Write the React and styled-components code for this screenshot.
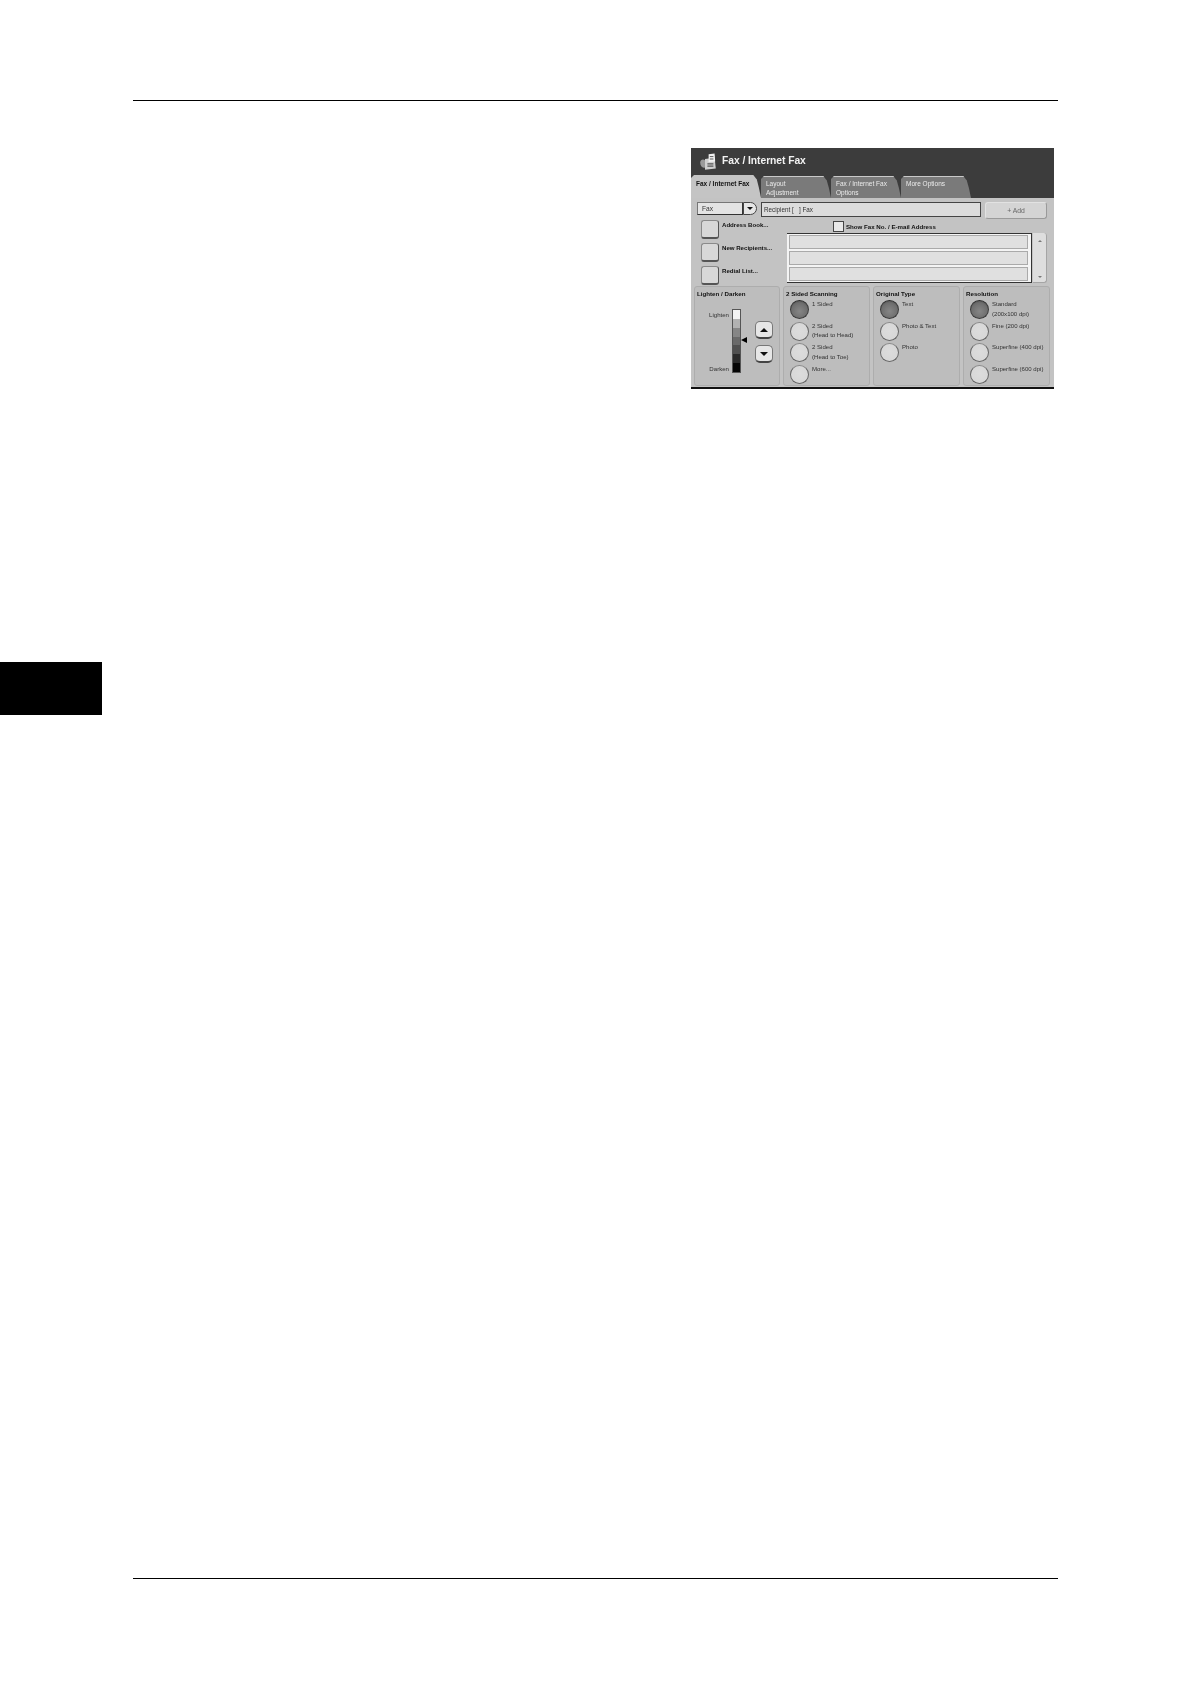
import React from "react";
import styled, { createGlobalStyle } from "styled-components";

const Global = createGlobalStyle`
  html, body { margin: 0; padding: 0; background: #fff; }
  body { font-family: "Liberation Sans", Arial, sans-serif; }
`;

const Page = styled.div`
  width: 1190px;
  height: 1684px;
  position: relative;
  overflow: hidden;
  background: #fff;
  display: flex;
  flex-direction: column;
  padding: 100px 132px 0 133px;
  box-sizing: border-box;
`;

const Rule = styled.div`
  height: 1px;
  background: #000;
  flex: none;
`;

const Content = styled.div`
  flex: none;
  height: 1477px;
  display: flex;
  justify-content: flex-end;
  align-items: flex-start;
  padding: 47px 4px 0 0;
  box-sizing: border-box;
`;

// black chapter marker that sits in the page margin
const ChapterTab = styled.div`
  position: absolute;
  left: 0;
  top: 662px;
  width: 102px;
  height: 53px;
  background: #000;
`;

const Screen = styled.div`
  width: 363px;
  height: 241px;
  background: #3c3c3c;
  display: flex;
  flex-direction: column;
  filter: blur(0.3px);
  color: #2a2a2a;
  box-sizing: border-box;
  border-bottom: 2px solid #111;
`;

const Header = styled.div`
  height: 27px;
  flex: none;
  display: flex;
  align-items: center;
  padding: 0 0 0 8px;
  gap: 5px;
`;

const Title = styled.div`
  color: #f2f2f2;
  font-size: 10.3px;
  font-weight: 700;
  letter-spacing: -0.05px;
  position: relative;
  top: -1px;
`;

const Tabs = styled.div`
  height: 23px;
  flex: none;
  display: flex;
`;

const Tab = styled.div`
  width: 70px;
  height: ${(p) => (p.$active ? 23 : 22)}px;
  margin-top: ${(p) => (p.$active ? 0 : 1)}px;
  box-sizing: border-box;
  padding: ${(p) => (p.$active ? 4 : 2)}px 0 0 5px;
  background: ${(p) => (p.$active ? "#c4c4c4" : "#7a7a7a")};
  color: ${(p) => (p.$active ? "#111" : "#ececec")};
  font-size: 6.5px;
  font-weight: ${(p) => (p.$active ? 700 : 400)};
  line-height: 9px;
  white-space: pre-line;
  clip-path: polygon(0 3px, 3px 0, 89% 0, 94% 20%, 97% 55%, 100% 100%, 0 100%);
  border-top: ${(p) => (p.$active ? "none" : "1px solid #c9c9c9")};
`;

const Body = styled.div`
  flex: 1;
  background: #c3c3c3;
  display: flex;
  flex-direction: column;
  padding: 4px 2px 1px 4px;
  box-sizing: border-box;
`;

const TopRow = styled.div`
  display: flex;
  align-items: flex-start;
  padding-left: 2px;
  height: 18px;
  flex: none;
`;

const Select = styled.div`
  width: 46px;
  height: 13px;
  box-sizing: border-box;
  background: #e4e4e4;
  border: 1px solid #333;
  border-left-color: #777;
  border-top-color: #777;
  font-size: 6.6px;
  line-height: 11px;
  padding-left: 4px;
  color: #333;
`;

const SelectArrow = styled.div`
  width: 14px;
  height: 13px;
  box-sizing: border-box;
  border: 1px solid #444;
  border-radius: 0 7px 7px 0;
  background: #e6e6e6;
  display: flex;
  align-items: center;
  justify-content: center;
  margin-right: 4px;
  &::after {
    content: "";
    border-left: 3px solid transparent;
    border-right: 3px solid transparent;
    border-top: 3px solid #111;
  }
`;

const Recipient = styled.div`
  width: 220px;
  height: 15px;
  box-sizing: border-box;
  background: #dcdcdc;
  border: 1px solid #444;
  font-size: 6.3px;
  line-height: 13px;
  padding-left: 2px;
  color: #333;
  margin-right: 4px;
`;

const AddButton = styled.div`
  width: 62px;
  height: 17px;
  box-sizing: border-box;
  background: #d4d4d4;
  border-radius: 3px;
  border: 1px solid #e2e2e2;
  border-bottom-color: #9a9a9a;
  border-right-color: #9a9a9a;
  font-size: 6.8px;
  line-height: 16px;
  text-align: center;
  color: #666;
`;

const MiddleRow = styled.div`
  display: flex;
  height: 65px;
  flex: none;
  align-items: flex-start;
`;

const ActionColumn = styled.div`
  width: 92px;
  flex: none;
  display: flex;
  flex-direction: column;
  gap: 4px;
  padding: 0 0 0 6px;
  box-sizing: border-box;
`;

const Action = styled.div`
  display: flex;
  align-items: flex-start;
  gap: 3px;
  height: 19px;
  font-size: 6.1px;
  font-weight: 700;
  line-height: 9px;
  color: #111;
  white-space: nowrap;
`;

const SquareButton = styled.div`
  width: 18px;
  height: 19px;
  flex: none;
  box-sizing: border-box;
  background: #d8d8d8;
  border: 1px solid #555;
  border-top-color: #8a8a8a;
  border-left-color: #8a8a8a;
  border-bottom-width: 2px;
  border-radius: 3px;
`;

const ListColumn = styled.div`
  display: flex;
  flex-direction: column;
  flex: none;
  width: 260px;
`;

const ShowRow = styled.div`
  display: flex;
  align-items: center;
  gap: 2px;
  height: 13px;
  padding-left: 46px;
  font-size: 6.15px;
  font-weight: 700;
  color: #111;
  white-space: nowrap;
`;

const CheckBox = styled.span`
  width: 11px;
  height: 11px;
  box-sizing: border-box;
  background: #e8e8e8;
  border: 1px solid #444;
  display: block;
`;

const ListWrap = styled.div`
  display: flex;
  gap: 1px;
`;

const List = styled.div`
  width: 245px;
  height: 50px;
  box-sizing: border-box;
  background: #f4f4f4;
  border: 1px solid #333;
  border-left: 0;
  display: flex;
  flex-direction: column;
  gap: 2px;
  padding: 1px 3px 1px 2px;
`;

const ListRow = styled.div`
  flex: 1;
  background: #e0e0e0;
  border: 1px solid #aaa;
`;

const ScrollBar = styled.div`
  width: 14px;
  height: 50px;
  box-sizing: border-box;
  background: #dedede;
  border-radius: 0 3px 3px 0;
  border-right: 1px solid #a5a5a5;
  border-bottom: 1px solid #a5a5a5;
  display: flex;
  flex-direction: column;
  justify-content: space-between;
  align-items: center;
  padding: 7px 0 4px;
`;

const ScrollArrow = styled.span`
  border-left: 2.5px solid transparent;
  border-right: 2.5px solid transparent;
  ${(p) =>
    p.$down
      ? "border-top: 2.5px solid #777;"
      : "border-bottom: 2.5px solid #777;"}
`;

const Panels = styled.div`
  flex: 1;
  display: flex;
  gap: 3px;
  margin: 1px 0 0 -1px;
`;

const Panel = styled.div`
  width: ${(p) => p.$w}px;
  flex: none;
  box-sizing: border-box;
  background: #bdbdbd;
  border: 1px solid #adadad;
  border-radius: 3px;
  padding: 2px 2px 0 2px;
  display: flex;
  flex-direction: column;
`;

const PanelTitle = styled.div`
  font-size: 6.2px;
  font-weight: 700;
  line-height: 9px;
  color: #111;
  white-space: nowrap;
`;

const Options = styled.div`
  display: flex;
  flex-direction: column;
  gap: 2.7px;
  margin-top: 2px;
  padding-left: 4px;
`;

const Option = styled.div`
  display: flex;
  align-items: flex-start;
  gap: 3px;
  height: 19px;
  font-size: 6.05px;
  line-height: 9.5px;
  color: #333;
  white-space: pre;
`;

const Radio = styled.div`
  width: 19px;
  height: 19px;
  flex: none;
  box-sizing: border-box;
  border-radius: 50%;
  border: 1.5px solid ${(p) => (p.$on ? "#3a3a3a" : "#666")};
  border-top-color: ${(p) => (p.$on ? "#2a2a2a" : "#8a8a8a")};
  background: ${(p) =>
    p.$on
      ? "radial-gradient(circle at 50% 60%, #868686 0%, #6e6e6e 60%, #444 100%)"
      : "radial-gradient(circle at 50% 45%, #dcdcdc 0%, #d8d8d8 65%, #f0f0f0 100%)"};
`;

const DensityBody = styled.div`
  display: flex;
  align-items: flex-start;
  margin-top: 11px;
`;

const DensityLabels = styled.div`
  width: 35px;
  height: 64px;
  margin-top: 1px;
  display: flex;
  flex-direction: column;
  justify-content: space-between;
  align-items: flex-end;
  font-size: 6.1px;
  line-height: 10px;
  color: #333;
  padding-right: 3px;
  box-sizing: border-box;
  flex: none;
`;

const Scale = styled.div`
  width: 9px;
  height: 64px;
  position: relative;
  flex: none;
  display: flex;
  flex-direction: column;
  box-sizing: border-box;
  border: 1px solid #555;
`;

const ScaleCell = styled.div`
  flex: 1;
  background: ${(p) => p.$c};
`;

// little pointer that lies next to the current density cell
const Marker = styled.div`
  position: absolute;
  left: 8px;
  top: 27px;
  border-top: 3.5px solid transparent;
  border-bottom: 3.5px solid transparent;
  border-right: 6px solid #000;
`;

const StepColumn = styled.div`
  display: flex;
  flex-direction: column;
  gap: 6px;
  margin: 12px 0 0 14px;
`;

const StepButton = styled.div`
  width: 18px;
  height: 18px;
  box-sizing: border-box;
  background: #e6e6e6;
  border: 1px solid #777;
  border-bottom: 2px solid #444;
  border-radius: 5px;
  display: flex;
  align-items: center;
  justify-content: center;
  &::after {
    content: "";
    border-left: 4.5px solid transparent;
    border-right: 4.5px solid transparent;
    ${(p) =>
      p.$down ? "border-top: 4.5px solid #111;" : "border-bottom: 4.5px solid #111;"}
  }
`;

const FaxIcon = () => (
  <svg width="18" height="18" viewBox="0 0 15 15">
    <path d="M1 8 C1 5 4 5 5 6 L5 12 C3 13 1 11 1 8 Z" fill="#9a9a9a" />
    <path d="M5 5 L13 4 L14 13 L5 14 Z" fill="#cfcfcf" />
    <path d="M8 1 L13 0.5 L13.5 7 L8 7.5 Z" fill="#f2f2f2" />
    <path d="M9 3 H12 M9 5 H12" stroke="#555" strokeWidth="0.8" />
    <path d="M7 9 H12 M7 11 H12" stroke="#555" strokeWidth="1" />
  </svg>
);

const scaleColors = ["#f2f2f2", "#b2b2b2", "#868686", "#6a6a6a", "#505050", "#2a2a2a", "#050505"];

const scanning = ["1 Sided", "2 Sided\n(Head to Head)", "2 Sided\n(Head to Toe)", "More..."];
const originals = ["Text", "Photo & Text", "Photo"];
const resolutions = ["Standard\n(200x100 dpi)", "Fine (200 dpi)", "Superfine (400 dpi)", "Superfine (600 dpi)"];

const OptionPanel = ({ title, items, w }) => (
  <Panel $w={w}>
    <PanelTitle>{title}</PanelTitle>
    <Options>
      {items.map((label, i) => (
        <Option key={label}>
          <Radio $on={i === 0} />
          <span>{label}</span>
        </Option>
      ))}
    </Options>
  </Panel>
);

export default function App() {
  return (
    <Page>
      <Global />
      <Rule />
      <Content>
        <Screen>
          <Header>
            <FaxIcon />
            <Title>Fax / Internet Fax</Title>
          </Header>
          <Tabs>
            <Tab $active>Fax / Internet Fax</Tab>
            <Tab>{"Layout\nAdjustment"}</Tab>
            <Tab>{"Fax / Internet Fax\nOptions"}</Tab>
            <Tab>More Options</Tab>
          </Tabs>
          <Body>
            <TopRow>
              <Select>Fax</Select>
              <SelectArrow />
              <Recipient>Recipient [ &nbsp; ] Fax</Recipient>
              <AddButton>+ Add</AddButton>
            </TopRow>
            <MiddleRow>
              <ActionColumn>
                <Action><SquareButton />Address Book...</Action>
                <Action><SquareButton />New Recipients...</Action>
                <Action><SquareButton />Redial List...</Action>
              </ActionColumn>
              <ListColumn>
                <ShowRow>
                  <CheckBox />
                  Show Fax No. / E-mail Address
                </ShowRow>
                <ListWrap>
                  <List>
                    <ListRow />
                    <ListRow />
                    <ListRow />
                  </List>
                  <ScrollBar>
                    <ScrollArrow />
                    <ScrollArrow $down />
                  </ScrollBar>
                </ListWrap>
              </ListColumn>
            </MiddleRow>
            <Panels>
              <Panel $w={86}>
                <PanelTitle>Lighten / Darken</PanelTitle>
                <DensityBody>
                  <DensityLabels>
                    <span>Lighten</span>
                    <span>Darken</span>
                  </DensityLabels>
                  <Scale>
                    {scaleColors.map((c) => (
                      <ScaleCell key={c} $c={c} />
                    ))}
                    <Marker />
                  </Scale>
                  <StepColumn>
                    <StepButton />
                    <StepButton $down />
                  </StepColumn>
                </DensityBody>
              </Panel>
              <OptionPanel title="2 Sided Scanning" items={scanning} w={87} />
              <OptionPanel title="Original Type" items={originals} w={87} />
              <OptionPanel title="Resolution" items={resolutions} w={87} />
            </Panels>
          </Body>
        </Screen>
      </Content>
      <Rule />
      <ChapterTab />
    </Page>
  );
}
